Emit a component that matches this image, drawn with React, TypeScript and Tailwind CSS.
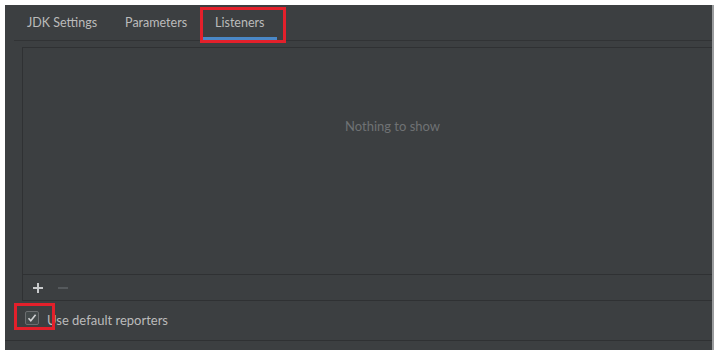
import React from "react";

const tabs = ["JDK Settings", "Parameters", "Listeners"];

export default function App() {
  const active = "Listeners";
  return (
    <div
      className="relative h-[357px] w-[720px] overflow-hidden bg-white pl-[5px] pt-[5px]"
      style={{ fontFamily: 'Lato, "Noto Sans", sans-serif' }}
    >
      <div className="flex h-[345px] w-[709px] flex-col border-r-2 border-[#9a9c9e] bg-[#3c3f41] text-[12.5px] text-[#bbbbbb]">
        {/* tabs */}
        <div className="ml-[9px] flex h-[36px] gap-[2px] border-b border-[#313335]">
          {tabs.map((t) => (
            <div
              key={t}
              className={
                "flex items-center border-b-[3px] px-[13px] pt-[5px] " +
                (t === active ? "border-[#4a88c7]" : "border-transparent")
              }
            >
              {t}
            </div>
          ))}
        </div>

        {/* listeners table */}
        <div className="ml-[17px] mt-[6px] flex h-[254px] flex-col border-y border-l border-[#2f3133]">
          <div className="flex-1 pl-[322px] pt-[69px] text-[13px] text-[#6f7274]">Nothing to show</div>
          <div className="flex h-[26px] items-center gap-[13px] border-t border-[#2f3133] pl-[9px]">
            <svg width="12" height="12" viewBox="0 0 12 12">
              <path d="M6 1v10M1 6h10" stroke="#c9cbcd" strokeWidth="2" />
            </svg>
            <svg width="12" height="12" viewBox="0 0 12 12">
              <path d="M1 6h10" stroke="#55595c" strokeWidth="2" />
            </svg>
          </div>
        </div>

        {/* checkbox row */}
        <div className="flex h-[40px] items-center gap-[8px] border-b border-[#2f3133] pl-[20px]">
          <div className="mb-[5px] flex h-[14px] w-[14px] items-center justify-center rounded-[2px] border border-[#6b6e70] bg-[#43494a]">
            <svg width="10" height="10" viewBox="0 0 10 10">
              <path d="M1.5 5.2l2.3 2.6L8.6 1.8" fill="none" stroke="#d0d2d4" strokeWidth="1.6" />
            </svg>
          </div>
          <span className="text-[13px]">Use default reporters</span>
        </div>
      </div>

      {/* annotation boxes */}
      <div className="absolute left-[200px] top-[7px] h-[36px] w-[86px] border-[3px] border-[#e3202b]" />
      <div className="absolute left-[14px] top-[303px] h-[27px] w-[41px] border-[3px] border-[#e3202b]" />
    </div>
  );
}
